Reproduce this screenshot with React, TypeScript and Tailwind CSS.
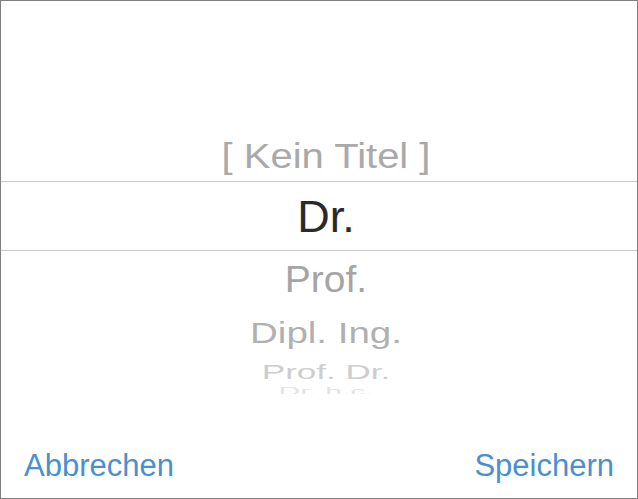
const items = [
    { label: '[ Kein Titel ]', row: 'h-[50px]', text: 'text-[40px] text-[#a9a9a9] scale-y-[0.86]' },
]

export default function App() {
    return (
        <div className="w-[638px] h-[499px] bg-white border border-[#7f7f7f] flex flex-col font-['Liberation_Sans',Arial,sans-serif]">
            <div className="h-[130px]" />
            {items.map((it, i) => (
                <div key={i} className={`${it.row} flex items-center justify-center pl-[14px]`}>
                    <span className={`leading-none ${it.text}`}>{it.label}</span>
                </div>
            ))}
            <div className="h-[70px] border-y border-[#c8c8c8] flex items-center justify-center pl-[14px]">
                <span className="leading-none text-[45px] text-[#2a2a2a]">Dr.</span>
            </div>
            <div className="h-[56px] flex items-center justify-center pl-[14px]">
                <span className="leading-none text-[39px] text-[#a5a5a5] scale-y-[0.93]">Prof.</span>
            </div>
            <div className="h-[52px] flex items-center justify-center pl-[14px]">
                <span className="leading-none text-[38.5px] text-[#b0b0b0] scale-y-[0.77]">Dipl. Ing.</span>
            </div>
            <div className="h-[24px] flex items-center justify-center pl-[14px]">
                <span className="leading-none text-[35px] text-[#cdcdcd] scale-y-[0.58]">Prof. Dr.</span>
            </div>
            <div className="h-[11px] overflow-hidden flex justify-center pl-[14px]">
                <span className="leading-none text-[30px] text-[#e4e4e4] scale-y-[0.35] origin-top mt-[3px]">Dr. h.c.</span>
            </div>
            <div className="flex-1 flex items-end justify-between px-[23px] pb-[17px]">
                <button className="text-[31px] leading-none text-[#4a8fd0]">Abbrechen</button>
                <button className="text-[31px] leading-none text-[#4a8fd0]">Speichern</button>
            </div>
        </div>
    )
}
